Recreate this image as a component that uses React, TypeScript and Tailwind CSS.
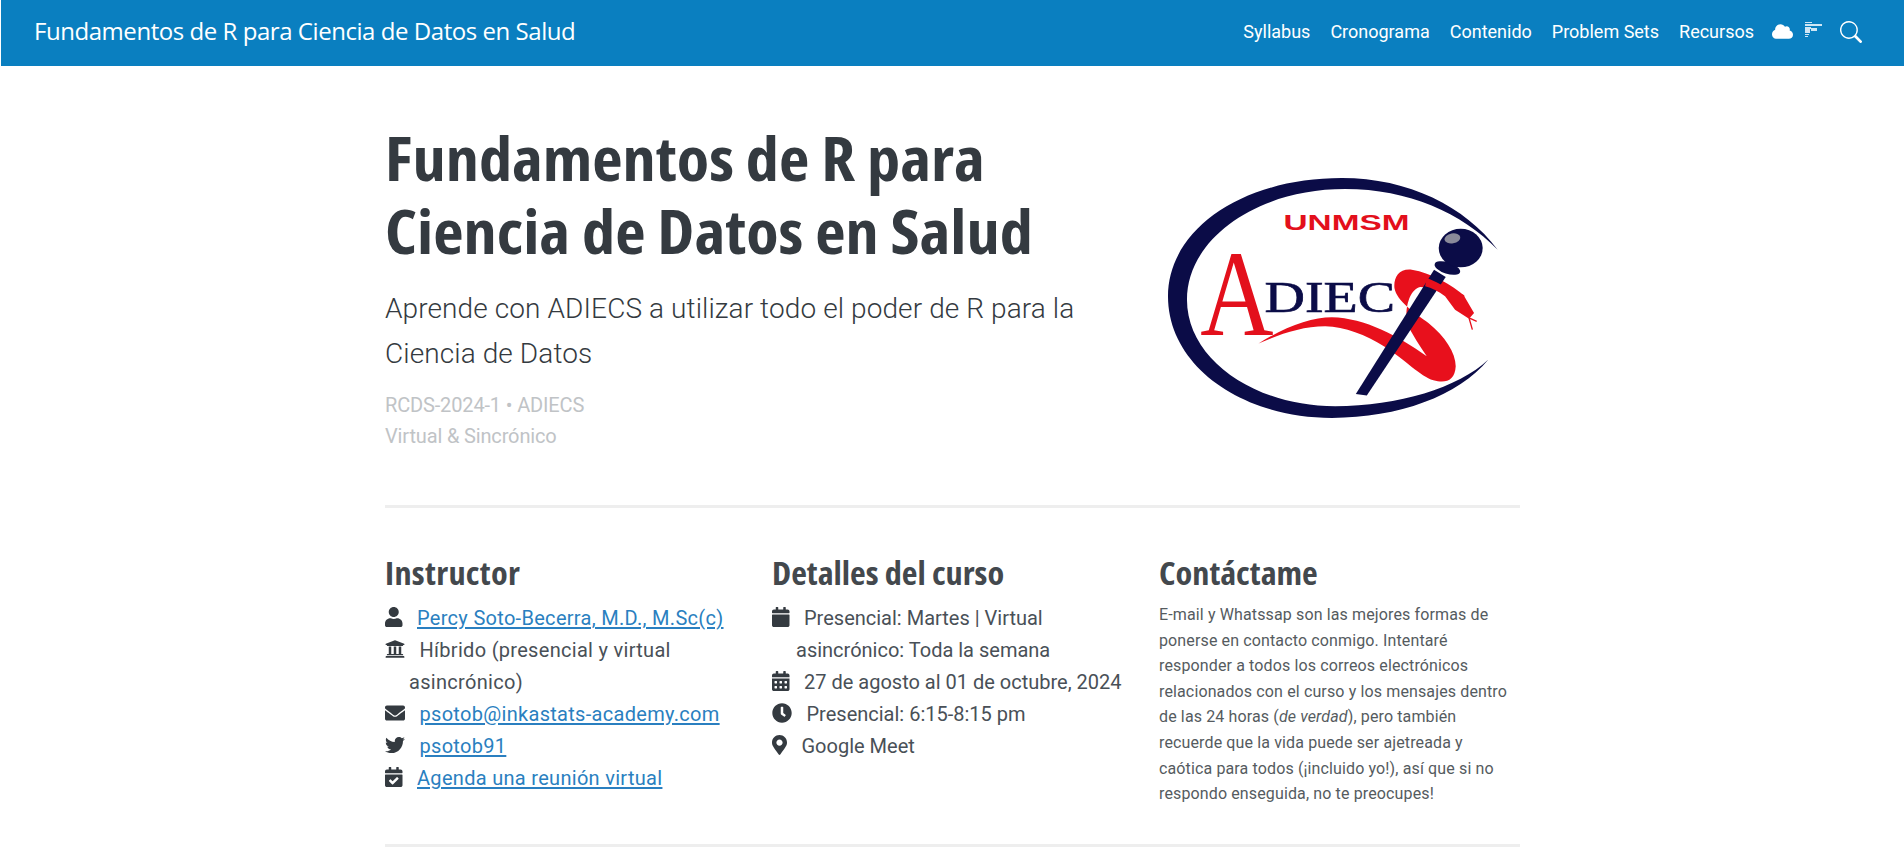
import { FaCalendar, FaCalendarAlt, FaCalendarCheck, FaClock, FaCloud, FaEnvelope, FaMapMarkerAlt, FaTwitter, FaUniversity, FaUser } from "react-icons/fa";
import { BsSearch } from "react-icons/bs";
import type { ReactNode } from "react";

const h3 = "font-['Open_Sans',sans-serif] [font-stretch:75%] font-bold text-[32px] leading-[44px] mb-[7px] text-[#43484d] whitespace-nowrap origin-left scale-x-[1.07]";

function Logo() {
  return (
    <svg viewBox="190 70 1030 750" className="w-[343px] h-[250px] shrink-0">
      <path
        fill="#0b0c47"
        d="M1198 300 C1100 170 930 85 730 85 C430 85 208 240 208 440 C208 650 430 805 700 805 C900 805 1080 740 1170 630 C1080 715 900 770 710 770 C470 770 265 630 265 450 C265 270 470 118 740 118 C930 118 1090 190 1198 300 Z"
      />
      <text x="555" y="242" fill="#e3101c" fontFamily="Liberation Sans" fontWeight="700" fontSize="66" textLength="378" lengthAdjust="spacingAndGlyphs">UNMSM</text>
      <text x="305" y="555" fill="#e3101c" fontFamily="Liberation Serif" fontSize="372" textLength="220" lengthAdjust="spacingAndGlyphs">A</text>
      <text x="498" y="487" fill="#0b0c47" stroke="#0b0c47" strokeWidth="2" fontFamily="Liberation Serif" fontSize="135" textLength="392" lengthAdjust="spacingAndGlyphs">DIEC</text>
      <path
        fill="#e8101c"
        d="M480 582 C560 530 640 503 700 503 C800 505 900 560 985 620 C975 605 950 570 930 530 C915 490 930 420 965 412 C1000 412 1040 425 1060 440 L1100 440 C1060 405 1000 370 940 360 C900 356 885 385 888 415 C895 455 950 490 990 520 C1040 560 1072 610 1072 650 C1070 695 1040 702 1005 692 C965 680 920 630 860 592 C800 555 740 532 680 530 C610 530 540 555 480 582 Z"
      />
      <path fill="#0b0c47" d="M772 733 L805 738 L1042 382 L1007 360 Z" />
      <path fill="#e8101c" d="M985 385 C1010 395 1040 410 1060 425 L1095 435 L1127 490 L1112 507 L1070 480 L1040 440 C1020 425 1000 415 980 410 Z" />
      <path fill="none" stroke="#e8101c" strokeWidth="4" d="M1112 505 L1122 540 M1112 505 L1135 515" />
      <ellipse cx="1047" cy="355" rx="40" ry="17" transform="rotate(18 1047 355)" fill="#0b0c47" />
      <ellipse cx="1087" cy="295" rx="66" ry="58" fill="#0b0c47" />
      <ellipse cx="1062" cy="266" rx="24" ry="15" fill="#8a8a9a" transform="rotate(-10 1062 266)" />
    </svg>
  );
}

function Item({ icon, children }: { icon: ReactNode; children: ReactNode }) {
  return (
    <li className="pl-6 -indent-6">
      <span className="inline-block align-[-2px] indent-0 mr-[14.5px] text-[#343a40]">{icon}</span>
      {children}
    </li>
  );
}

function Enlace({ children }: { children: ReactNode }) {
  return (
    <a href="#" className="text-[#2a7fc0] underline underline-offset-2">
      {children}
    </a>
  );
}

export default function App() {
  return (
    <div className="min-h-[852px] bg-white font-['Roboto',sans-serif] overflow-hidden">
      <nav className="ml-px h-[66px] bg-[#0a7fc0] flex items-center pl-[33px] pr-[42px] text-white">
        <a href="#" className="mb-1 font-['Open_Sans',sans-serif] text-[24px] tracking-[-0.45px]">
          Fundamentos de R para Ciencia de Datos en Salud
        </a>
        <div className="ml-auto mb-[3px] flex items-center text-[18px]">
          <div className="flex gap-5">
            <a href="#">Syllabus</a>
            <a href="#">Cronograma</a>
            <a href="#">Contenido</a>
            <a href="#">Problem Sets</a>
            <a href="#">Recursos</a>
          </div>
          <FaCloud className="ml-[18px] text-[21px]" />
          <svg viewBox="0 0 17 16" className="ml-[12px] w-[17px] h-4 mb-1" fill="#cfe6f5">
            <path d="M0 0h7v1H0zM0 2h17v2H0zM0 5h6v1h2v1H0zM0 7h5v3H0zM6 6h6v3H6zM0 10h5v1H0zM0 12h4v1H0zM0 14h3v1H0z" />
          </svg>
          <BsSearch className="ml-[18px] text-[22px]" />
        </div>
      </nav>

      <main className="w-[1135px] ml-[385px]">
        <header className="flex items-start justify-between pt-[56px] pb-[53px] border-b-[3px] border-[#eeeeee]">
          <div className="w-[720px]">
            <h1 className="font-['Open_Sans',sans-serif] [font-stretch:75%] font-bold text-[60px] leading-[73px] text-[#343a40] whitespace-nowrap origin-left scale-x-[1.105]">
              Fundamentos de R para
              <br />
              Ciencia de Datos en Salud
            </h1>
            <p className="mt-[18px] text-[28px] font-light leading-[45px] tracking-[0.1px] text-[#343a40]">
              Aprende con ADIECS a utilizar todo el poder de R para la Ciencia de Datos
            </p>
            <p className="mt-[14px] text-[20px] leading-[31px] tracking-[-0.15px] text-[#c0c3c6]">
              RCDS-2024-1 • ADIECS
              <br />
              Virtual &amp; Sincrónico
            </p>
          </div>
          <div className="mt-[51px] mr-[15px]">
            <Logo />
          </div>
        </header>

        <section className="grid grid-cols-[387px_387px_1fr] pt-[43px] pb-[37px] border-b-[3px] border-[#eeeeee] text-[20px] leading-[32px] text-[#495057]">
          <div className="pr-5 tracking-[0.3px]">
            <h3 className={h3}>Instructor</h3>
            <ul>
              <Item icon={<FaUser className="h-5 w-[17.5px]" />}><Enlace>Percy Soto-Becerra, M.D., M.Sc(c)</Enlace></Item>
              <Item icon={<FaUniversity className="h-5 w-5" />}>Híbrido (presencial y virtual asincrónico)</Item>
              <Item icon={<FaEnvelope className="h-5 w-5" />}><Enlace>psotob@inkastats-academy.com</Enlace></Item>
              <Item icon={<FaTwitter className="h-5 w-5" />}><Enlace>psotob91</Enlace></Item>
              <Item icon={<FaCalendarCheck className="h-5 w-[17.5px]" />}><Enlace>Agenda una reunión virtual</Enlace></Item>
            </ul>
          </div>
          <div className="pr-5">
            <h3 className={h3}>Detalles del curso</h3>
            <ul>
              <Item icon={<FaCalendar className="h-5 w-[17.5px]" />}>Presencial: Martes | Virtual asincrónico: Toda la semana</Item>
              <Item icon={<FaCalendarAlt className="h-5 w-[17.5px]" />}>27 de agosto al 01 de octubre, 2024</Item>
              <Item icon={<FaClock className="h-5 w-5" />}>Presencial: 6:15-8:15 pm</Item>
              <Item icon={<FaMapMarkerAlt className="h-5 w-[15px]" />}>Google Meet</Item>
            </ul>
          </div>
          <div>
            <h3 className={h3}>Contáctame</h3>
            <p className="text-[16px] leading-[25.6px] tracking-[0.13px] text-[#555b60]">
              E-mail y Whatssap son las mejores formas de
              <br />
              ponerse en contacto conmigo. Intentaré
              <br />
              responder a todos los correos electrónicos
              <br />
              relacionados con el curso y los mensajes dentro
              <br />
              de las 24 horas (<em>de verdad</em>), pero también
              <br />
              recuerde que la vida puede ser ajetreada y
              <br />
              caótica para todos (¡incluido yo!), así que si no
              <br />
              respondo enseguida, no te preocupes!
            </p>
          </div>
        </section>
      </main>
    </div>
  );
}
